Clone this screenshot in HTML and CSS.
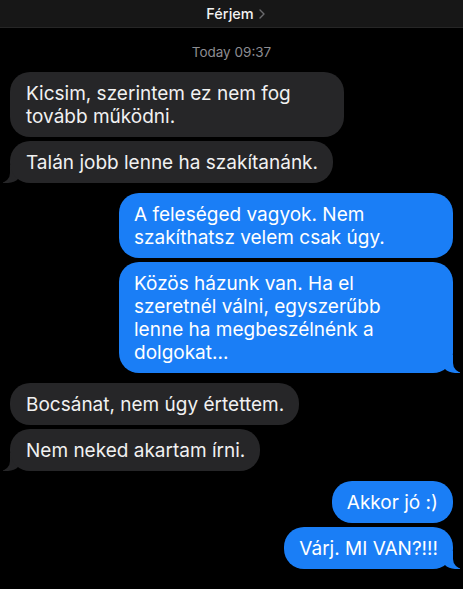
FILE: index.html
```html
<!DOCTYPE html>
<html lang="hu">
<head>
<meta charset="utf-8">
<title>Férjem</title>
<link rel="stylesheet" href="styles.css">
</head>
<body>
<header class="topbar">
  <span class="title">Férjem</span>
  <svg class="chev" width="6" height="10" viewBox="0 0 6 10"><path d="M1 1 L5 5 L1 9" fill="none" stroke="#6b6b6e" stroke-width="1.4" stroke-linecap="round" stroke-linejoin="round"/></svg>
</header>
<div class="stamp">Today 09:37</div>
<main class="thread">
  <div class="msg in wide">Kicsim, szerintem ez nem fog<br>tovább működni.</div>
  <div class="msg in tail gap-s">Talán jobb lenne ha szakítanánk.</div>
  <div class="msg out wide gap-l">A feleséged vagyok. Nem<br>szakíthatsz velem csak úgy.</div>
  <div class="msg out wide tail gap-s">Közös házunk van. Ha el<br>szeretnél válni, egyszerűbb<br>lenne ha megbeszélnénk a<br>dolgokat...</div>
  <div class="msg in gap-l">Bocsánat, nem úgy értettem.</div>
  <div class="msg in tail gap-s">Nem neked akartam írni.</div>
  <div class="msg out gap-l">Akkor jó :)</div>
  <div class="msg out tail gap-s">Várj. MI VAN?!!!</div>
</main>
</body>
</html>
```
FILE: styles.css
```css
* { box-sizing: border-box; }
html, body { margin: 0; padding: 0; }
body {
  background: #000;
  width: 463px;
  height: 589px;
  overflow: hidden;
  font-family: Inter, "Liberation Sans", Arial, sans-serif;
  color: #fff;
}
.topbar {
  height: 28px;
  background: #171717;
  border-bottom: 1px solid #262626;
  display: flex;
  align-items: center;
  justify-content: center;
  gap: 5px;
  padding-left: 8px;
}
.title {
  font-size: 14.5px;
  font-weight: 500;
  color: #f2f2f2;
}
.chev { margin-top: 1px; }
.stamp {
  text-align: center;
  font-size: 13.5px;
  color: #8d8d92;
  padding-top: 16px;
  height: 44px;
}
.thread {
  position: relative;
  z-index: 0;
  display: flex;
  flex-direction: column;
  padding: 0 10px;
}
.msg {
  position: relative;
  font-size: 19px;
  line-height: 23px;
  padding: 10px 15px 9px 16px;
  border-radius: 20px;
  max-width: 334px;
  white-space: nowrap;
}
.msg.wide { width: 334px; }
.in {
  align-self: flex-start;
  background: #262628;
  color: #f1f1f1;
}
.out {
  align-self: flex-end;
  background: #1a7ef6;
  color: #fff;
  padding-left: 15px;
}
.gap-s { margin-top: 4px; }
.gap-l { margin-top: 10px; }
.tail.in::before {
  content: "";
  position: absolute;
  bottom: 0;
  left: -7px;
  width: 20px;
  height: 18px;
  background: #262628;
  border-bottom-right-radius: 15px;
  z-index: -1;
}
.tail.in::after {
  content: "";
  position: absolute;
  bottom: 0;
  left: -10px;
  width: 10px;
  height: 20px;
  background: #000;
  border-bottom-right-radius: 10px;
  z-index: -1;
}
.tail.out::before {
  content: "";
  position: absolute;
  bottom: 0;
  right: -7px;
  width: 20px;
  height: 18px;
  background: #1a7ef6;
  border-bottom-left-radius: 15px;
  z-index: -1;
}
.tail.out::after {
  content: "";
  position: absolute;
  bottom: 0;
  right: -10px;
  width: 10px;
  height: 20px;
  background: #000;
  border-bottom-left-radius: 10px;
  z-index: -1;
}
```
